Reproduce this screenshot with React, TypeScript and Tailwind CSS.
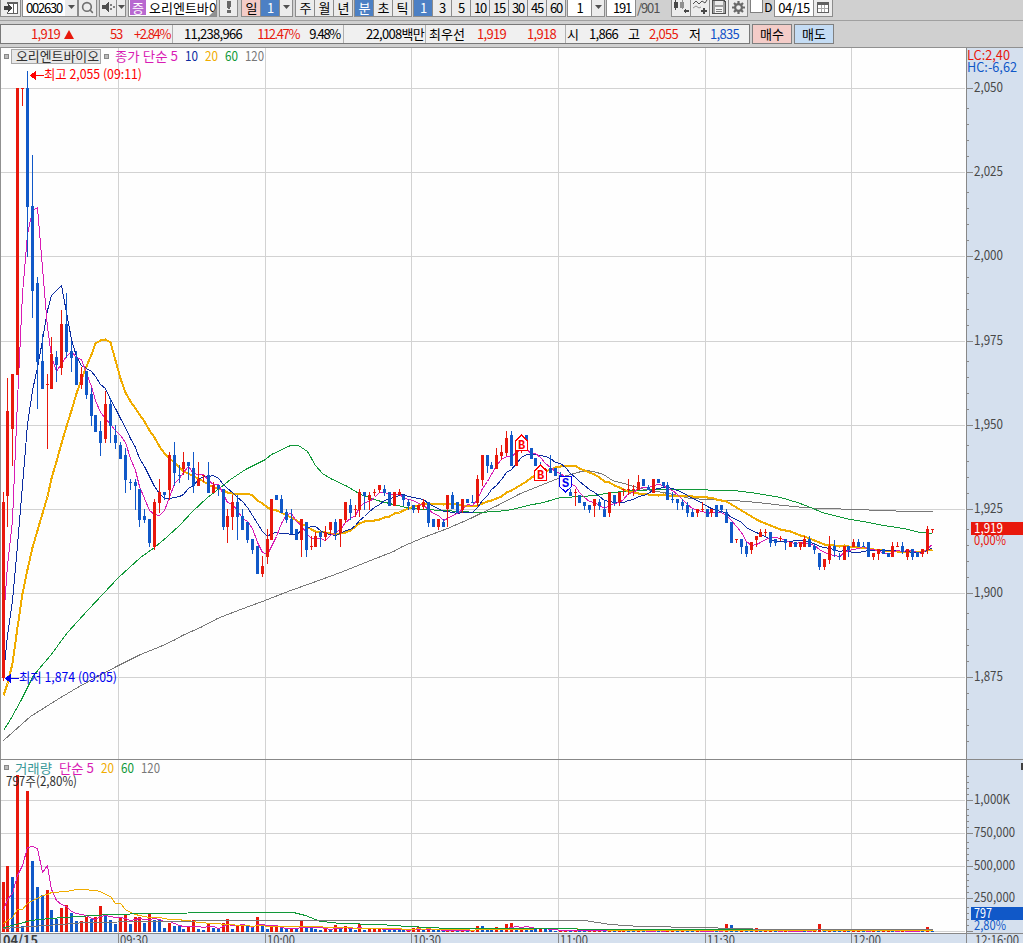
import type { ReactNode } from 'react';
import { Search } from 'lucide-react';

const RED = '#e8180c';
const BLUE = '#1058c8';
const MAGENTA = '#d81cb4';
const NAVY = '#0c2ca0';
const AMBER = '#f0ac00';
const GREEN = '#109838';
const GRAY = '#787878';

type Candle = [dir: 'u' | 'd', high: number, top: number, bottom: number, low: number];

// one-minute candles, y positions on the price pane
const candles: Candle[] = [
  ['u', 492, 502, 678, 681], ['u', 378, 411, 496, 527], ['u', 374, 374, 429, 466], ['u', 88, 88, 375, 375],
  ['u', 88, 88, 89, 106], ['d', 71, 88, 207, 257], ['d', 155, 206, 291, 318], ['d', 277, 283, 362, 409],
  ['d', 334, 361, 389, 389], ['u', 374, 384, 385, 449], ['u', 337, 354, 389, 389], ['d', 351, 357, 365, 382],
  ['u', 310, 324, 368, 375], ['d', 293, 324, 352, 358], ['d', 341, 351, 358, 372], ['d', 351, 357, 385, 385],
  ['u', 367, 374, 385, 389], ['d', 371, 371, 395, 399], ['d', 388, 394, 416, 426], ['d', 415, 415, 432, 432],
  ['d', 421, 431, 443, 456], ['u', 391, 404, 439, 443], ['d', 398, 404, 426, 443], ['d', 425, 435, 443, 449],
  ['d', 442, 445, 459, 459], ['d', 448, 455, 480, 493], ['d', 479, 482, 483, 490], ['d', 479, 482, 486, 510],
  ['d', 489, 489, 520, 527], ['d', 509, 516, 520, 523], ['d', 519, 519, 543, 547], ['u', 499, 502, 547, 550],
  ['u', 479, 492, 503, 513], ['d', 492, 492, 495, 500], ['u', 452, 455, 490, 500], ['d', 442, 455, 473, 486],
  ['d', 465, 475, 476, 483], ['u', 452, 462, 469, 475], ['d', 462, 462, 466, 480], ['d', 452, 468, 486, 493],
  ['u', 462, 479, 486, 486], ['u', 475, 475, 476, 482], ['d', 462, 475, 493, 493], ['u', 482, 485, 493, 493],
  ['d', 485, 485, 489, 496], ['d', 489, 489, 527, 530], ['u', 509, 516, 527, 543], ['u', 495, 502, 517, 530],
  ['d', 495, 502, 517, 540], ['d', 509, 516, 530, 530], ['d', 522, 522, 540, 543], ['d', 539, 539, 550, 554],
  ['d', 546, 546, 574, 574], ['u', 556, 566, 574, 577], ['u', 529, 539, 557, 564], ['u', 499, 499, 540, 540],
  ['d', 495, 495, 500, 500], ['d', 495, 499, 513, 513], ['d', 509, 512, 520, 523], ['d', 509, 519, 534, 534],
  ['d', 529, 529, 540, 540], ['u', 519, 519, 540, 557], ['d', 522, 522, 550, 557], ['u', 536, 546, 547, 550],
  ['u', 532, 536, 547, 547], ['d', 532, 532, 537, 547], ['u', 526, 532, 537, 541], ['u', 522, 522, 530, 534],
  ['d', 519, 522, 533, 540], ['u', 519, 519, 533, 547], ['u', 502, 502, 520, 523], ['d', 499, 505, 513, 520],
  ['u', 505, 509, 510, 517], ['u', 489, 492, 510, 517], ['d', 492, 492, 496, 510], ['u', 492, 495, 500, 510],
  ['u', 489, 492, 493, 496], ['u', 485, 485, 490, 493], ['d', 485, 489, 493, 496], ['d', 492, 492, 506, 506],
  ['u', 492, 492, 506, 506], ['u', 489, 492, 495, 495], ['d', 495, 495, 500, 506], ['d', 499, 502, 506, 510],
  ['d', 505, 505, 510, 513], ['u', 505, 505, 510, 513], ['u', 499, 502, 507, 510], ['d', 502, 502, 523, 527],
  ['d', 519, 519, 527, 527], ['u', 519, 519, 527, 530], ['d', 519, 522, 527, 527], ['u', 495, 495, 509, 527],
  ['d', 492, 495, 509, 509], ['d', 502, 502, 513, 513], ['u', 499, 499, 510, 513], ['d', 499, 499, 503, 503],
  ['d', 495, 502, 503, 503], ['u', 475, 479, 503, 506], ['u', 455, 455, 480, 486], ['d', 455, 455, 466, 473],
  ['d', 462, 465, 469, 469], ['u', 448, 455, 469, 469], ['u', 445, 452, 456, 460], ['u', 431, 438, 453, 456],
  ['d', 431, 435, 466, 466], ['u', 449, 449, 466, 466], ['u', 440, 440, 451, 453], ['d', 435, 435, 450, 450],
  ['d', 448, 448, 459, 459], ['d', 458, 458, 466, 466], ['d', 462, 465, 470, 470], ['u', 468, 469, 470, 472],
  ['d', 455, 468, 473, 473], ['d', 468, 468, 476, 476], ['d', 472, 475, 479, 479], ['d', 478, 478, 489, 489],
  ['d', 489, 492, 496, 496], ['u', 489, 492, 493, 506], ['d', 495, 495, 503, 503], ['d', 502, 502, 506, 510],
  ['d', 505, 505, 510, 513], ['u', 499, 499, 506, 517], ['d', 499, 502, 506, 510], ['d', 500, 509, 517, 517],
  ['u', 492, 492, 513, 517], ['d', 495, 495, 503, 506], ['u', 492, 492, 502, 506], ['u', 489, 489, 490, 496],
  ['u', 479, 489, 490, 495], ['u', 485, 489, 490, 496], ['u', 475, 482, 490, 490], ['d', 479, 479, 486, 486],
  ['d', 485, 487, 490, 490], ['u', 479, 479, 493, 493], ['d', 479, 479, 483, 483], ['d', 482, 482, 486, 487],
  ['d', 482, 485, 500, 500], ['d', 492, 499, 500, 503], ['d', 499, 499, 503, 510], ['d', 499, 502, 506, 510],
  ['d', 502, 505, 513, 517], ['d', 509, 512, 517, 517], ['u', 509, 509, 513, 517], ['u', 502, 509, 510, 512],
  ['d', 509, 509, 517, 517], ['u', 509, 509, 513, 517], ['d', 505, 505, 517, 517], ['d', 505, 505, 510, 513],
  ['d', 509, 512, 523, 523], ['d', 522, 522, 543, 543], ['u', 539, 539, 540, 543], ['d', 539, 539, 547, 554],
  ['d', 542, 546, 554, 557], ['u', 542, 542, 550, 554], ['u', 536, 536, 540, 547], ['u', 529, 532, 537, 537],
  ['u', 529, 532, 533, 536], ['d', 532, 532, 543, 547], ['d', 539, 539, 543, 546], ['u', 536, 538, 539, 541],
  ['d', 539, 539, 543, 550], ['u', 542, 542, 547, 547], ['d', 542, 542, 547, 547], ['u', 542, 542, 547, 550],
  ['u', 536, 539, 547, 547], ['d', 536, 539, 547, 547], ['d', 543, 546, 550, 554], ['d', 553, 553, 567, 570],
  ['u', 559, 559, 567, 570], ['u', 536, 546, 560, 564], ['d', 540, 546, 551, 557], ['d', 553, 556, 557, 560],
  ['u', 546, 546, 560, 560], ['d', 546, 546, 550, 557], ['u', 539, 542, 547, 547], ['d', 539, 542, 547, 547],
  ['d', 542, 546, 547, 547], ['d', 542, 542, 557, 557], ['u', 553, 553, 557, 560], ['u', 549, 549, 554, 560],
  ['d', 549, 549, 554, 554], ['d', 553, 553, 557, 557], ['u', 542, 546, 557, 557], ['u', 542, 546, 547, 547],
  ['d', 542, 546, 552, 554], ['u', 549, 549, 557, 560], ['d', 549, 549, 557, 560], ['d', 552, 552, 557, 557],
  ['u', 549, 549, 554, 557], ['u', 526, 529, 550, 554], ['u', 529, 529, 530, 533],
];

// bar heights on the volume pane, the remaining minutes are all close to zero
const volumeHead = [
  50, 66, 55, 157, 6, 141, 71, 45, 37, 42, 22, 13, 24, 27, 19, 10.9, 11, 15, 13, 15, 26, 16, 12, 8, 15, 18, 8, 14.9,
  15, 9, 18, 12, 11.9, 4, 9, 6, 5.9, 3, 5, 12, 3, 2, 9, 4, 3.9, 9, 13, 3, 6, 7, 6, 5, 15, 6, 3, 5, 6, 4, 3, 3.1, 3,
  11, 5, 4, 3, 2, 4, 2, 7, 4, 6, 3, 2, 8, 2, 2.9, 3, 3.1, 3, 2.9, 2.8, 2.7, 2, 2.1, 4, 5, 2, 3, 2.5, 2.4, 1, 1.1,
  2, 1.8, 2, 1.8, 2, 6, 5.9, 2, 1.9, 5, 2, 8, 9, 4, 4.1, 4, 3.9, 3.8, 3.9, 3,
];
const volumePeaks: Record<number, number> = {
  117: 2, 122: 3, 127: 3, 137: 3, 148: 8, 149: 7, 154: 4, 166: 3, 167: 8, 172: 3, 178: 3, 189: 5, 190: 1,
};
const volumes = candles.map((_, i) => volumeHead[i] ?? volumePeaks[i] ?? (i % 3 === 1 ? 1.6 : 1.5 - (i % 2) * 0.1));

const barX = (i: number) => Math.floor(3.02 + 4.8895 * i);

const movingAverage = (values: number[], span: number, head: number[]) =>
  values
    .map((_, i) => {
      if (i < span - 1) return head[i] === undefined ? '' : `${barX(i)},${head[i]}`;
      const slice = values.slice(i - span + 1, i + 1);
      const mean = slice.reduce((a, b) => a + b, 0) / span;
      return `${barX(i)},${Math.round(mean)}`;
    })
    .join(' ');

const closes = candles.map(([dir, , top, bottom]) => (dir === 'u' ? top : bottom));
const volumeY = volumes.map((v) => 932 - v);

const ma5 = movingAverage(closes, 5, [620, 565, 520, 400]);
const ma10 = movingAverage(closes, 10, [675, 635, 600, 545, 485, 424, 390, 367, 340]);
const ma20 = movingAverage(
  closes,
  20,
  [695, 683, 663, 627, 593, 569, 547, 530, 513, 496, 478, 461, 443, 426, 410, 393, 379, 366, 354]
);
const ma60 =
  '3,730 10,719 21,699 33,675 50,655 67,632 87,610 103,593 118,577 140,557 154,547 167,536 180,524 192,511 207,497 220,487 230,479 245,469 265,459 271,454 290,445 298,445 307,451 315,465 322,473 330,478 347,486 360,494 377,500 393,504 410,508 423,509 443,510 460,511 477,512 497,511 512,509 527,505 543,502 560,497 583,496 593,495 613,492 633,490 660,489 700,489 715,490 733,490 750,492 763,494 780,497 797,502 810,507 822,512 837,516 850,519 863,521 883,525 903,528 920,532 932,533';
const ma120 =
  '3,740 30,716 57,699 77,687 97,676 118,665 140,654 160,646 175,639 182,635 200,627 217,618 240,609 262,601 290,590 310,583 340,572 370,560 393,551 402,546 423,537 447,528 470,518 480,513 497,505 520,493 540,485 560,477 577,472 585,470 593,471 603,474 612,480 627,484 640,488 657,491 673,494 690,498 707,499 733,500 757,502 783,505 803,507 820,508 860,509 877,510 913,511 932,511';

const vol5 = movingAverage(volumeY, 5, [910, 899, 893, 875]);
const vol20 = movingAverage(
  volumeY,
  20,
  [923, 920, 917, 909, 909, 903, 900, 898, 895, 894, 892, 892, 891, 891, 890, 889, 889, 889, 890]
);
const vol60 =
  '3,927 20,923 30,920 50,918 78,916 110,914 150,913 225,912 275,912 293,912 305,915 320,921 333,922 338,923 380,924 407,926 430,927 447,928 560,928 593,929 600,929 932,929';
const vol120 = '3,928 30,926 60,924 85,922 150,921 240,920 585,920 590,921 610,924 640,926 700,927 770,929 932,929';

const gridX = [118, 265, 411, 558, 705, 851];
const priceTicks: [number, string][] = [
  [88, '2,050'], [172, '2,025'], [256, '2,000'], [341, '1,975'], [425, '1,950'], [509, '1,925'], [593, '1,900'],
  [677, '1,875'],
];
const volumeTicks: [number, string][] = [[800, '1,000K'], [833, '750,000'], [866, '500,000'], [898, '250,000']];
const hours: [number, string][] = [
  [118, '09:30'], [265, '10:00'], [411, '10:30'], [558, '11:00'], [705, '11:30'], [851, '12:00'],
];

function Line({ points, color, width = 1 }: { points: string; color: string; width?: number }) {
  return (
    <polyline points={points} fill="none" stroke={color} strokeWidth={width} transform="translate(0.5 0.5)" />
  );
}

function Label({ x, y, w, fill, children }: { x: number; y: number; w: number; fill: string; children: string }) {
  return (
    <text x={x} y={y} fill={fill} textLength={w} lengthAdjust="spacingAndGlyphs" stroke="none">
      {children}
    </text>
  );
}

function Marker({ x, y, kind }: { x: number; y: number; kind: 'B' | 'S' }) {
  const color = kind === 'B' ? '#ff0000' : '#0000f0';
  const d = kind === 'B' ? 'M-6 6 L0 0 L6 6 V15.5 H-6 Z' : 'M-6 0 H6 V10 L0 15.5 L-6 10 Z';
  return (
    <g transform={`translate(${x} ${y})`}>
      <path d={d} fill="#fff" stroke={color} />
      <text
        x="0"
        y={kind === 'B' ? 14 : 10}
        fill={color}
        textAnchor="middle"
        className="font-['Liberation_Mono',monospace] text-[12px] font-bold"
      >
        {kind}
      </text>
    </g>
  );
}

function Chart() {
  return (
    <svg width="966" height="886" viewBox="0 48 966 886" className="block bg-[#fefefe]" shapeRendering="crispEdges">
      <g fill="#d2d2d2">
        {gridX.map((x) => (
          <rect key={x} x={x} y="48" width="1" height="886" />
        ))}
        {[...priceTicks, ...volumeTicks].map(([y]) => (
          <rect key={y} x="0" y={y} width="965" height="1" />
        ))}
        <rect x="0" y="931" width="965" height="1" />
      </g>
      <rect x="0" y="48" width="1" height="886" fill="#909090" />
      <rect x="0" y="759" width="966" height="1" fill="#888" />

      {/* volume */}
      {volumes.map((v, i) => {
        const h = Math.max(1, Math.round(v));
        return (
          <rect
            key={i}
            x={barX(i) - 1}
            y={932 - h}
            width="3"
            height={h}
            fill={i === 0 || v > volumes[i - 1] ? RED : BLUE}
          />
        );
      })}
      <Line points={vol5} color={MAGENTA} />
      <Line points={vol20} color={AMBER} />
      <Line points={vol60} color={GREEN} />
      <Line points={vol120} color={GRAY} />
      <Label x={6} y={786} w={71} fill="#303030">797주(2,80%)</Label>

      {/* price */}
      <Line points={ma120} color={GRAY} />
      <Line points={ma60} color={GREEN} />
      <Line points={ma20} color={AMBER} width={2} />
      <Line points={ma10} color={NAVY} />
      <Line points={ma5} color={MAGENTA} />
      {candles.map(([dir, high, top, bottom, low], i) => (
        <g key={i} fill={dir === 'u' ? RED : BLUE}>
          <rect x={barX(i)} y={high} width="1" height={Math.max(1, low - high)} />
          <rect x={barX(i) - 1} y={top} width="3" height={bottom - top} />
        </g>
      ))}
      <Marker x={521.5} y={435} kind="B" />
      <Marker x={540.5} y={465} kind="B" />
      <Marker x={565.5} y={476.5} kind="S" />

      <path d="M30 75.5 L36 70.5 V80.5 Z" fill="#ff0000" />
      <rect x="36" y="75" width="8" height="1" fill="#ff0000" />
      <Label x={44} y={79} w={98} fill="#ff0000">최고 2,055 (09:11)</Label>
      <path d="M5 678.5 L11 673.5 V683.5 Z" fill="#0000f0" />
      <rect x="11" y="678" width="8" height="1" fill="#0000f0" />
      <Label x={19} y={682} w={98} fill="#0000f0">최저 1,874 (09:05)</Label>

      {/* legends */}
      <rect x="4.5" y="54.5" width="4" height="4" fill="#bbb" stroke="#888" />
      <rect x="11.5" y="49.5" width="89" height="14" fill="#e8e8e8" stroke="#a8a8a8" />
      <Label x={16} y={61} w={83} fill="#303030">오리엔트바이오</Label>
      <rect x="104.5" y="54.5" width="4" height="4" fill="#bbb" stroke="#888" />
      <Label x={115} y={61} w={63} fill={MAGENTA}>종가 단순 5</Label>
      <Label x={185} y={61} w={13} fill={NAVY}>10</Label>
      <Label x={205} y={61} w={13} fill={AMBER}>20</Label>
      <Label x={225} y={61} w={13} fill={GREEN}>60</Label>
      <Label x={245} y={61} w={19} fill={GRAY}>120</Label>
      <rect x="4.5" y="765.5" width="4" height="4" fill="#bbb" stroke="#888" />
      <Label x={15} y={773} w={37} fill="#389898">거래량</Label>
      <Label x={59} y={773} w={35} fill={MAGENTA}>단순 5</Label>
      <Label x={101} y={773} w={13} fill={AMBER}>20</Label>
      <Label x={121} y={773} w={13} fill={GREEN}>60</Label>
      <Label x={141} y={773} w={19} fill={GRAY}>120</Label>
    </svg>
  );
}

function ValueAxis() {
  return (
    <svg width="57" height="886" viewBox="966 48 57 886" className="block bg-[#d5e0ee]" shapeRendering="crispEdges">
      <rect x="966" y="48" width="1" height="886" fill="#888" />
      <rect x="966" y="759" width="57" height="1" fill="#888" />
      <g fill="#888">
        {priceTicks.map(([y]) => (
          <g key={y}>
            <rect x="967" y={y} width="6" height="1" />
            {[16, 32, 48, 64].map((d) => y - d > 72 && <rect key={d} x="967" y={y - d} width="2" height="1" />)}
          </g>
        ))}
        {[693, 709, 725, 741].map((y) => (
          <rect key={y} x="967" y={y} width="2" height="1" />
        ))}
        {[...volumeTicks.map(([y]) => y), 931].map((y) => (
          <g key={y}>
            <rect x="967" y={y} width="6" height="1" />
            {[6, 12, 18, 24].map((d) => (
              <rect key={d} x="967" y={y - d} width="2" height="1" />
            ))}
          </g>
        ))}
      </g>
      <Label x={967} y={60} w={43} fill={RED}>LC:2,40</Label>
      <Label x={967} y={72} w={50} fill={BLUE}>HC:-6,62</Label>
      {priceTicks.map(([y, text]) => (
        <Label key={y} x={974} y={y + 4} w={29} fill="#484848">{text}</Label>
      ))}
      {volumeTicks.map(([y, text]) => (
        <Label key={y} x={974} y={y + 4} w={text.length === 6 ? 36 : 41} fill="#484848">{text}</Label>
      ))}
      <rect x="971" y="522" width="52" height="13" fill={RED} />
      <Label x={974} y={533} w={29} fill="#fff">1,919</Label>
      <Label x={974} y={545} w={32} fill={RED}>0,00%</Label>
      <rect x="971" y="907" width="52" height="13" fill={BLUE} />
      <Label x={974} y={918} w={18} fill="#fff">797</Label>
      <Label x={974} y={930} w={32} fill={BLUE}>2,80%</Label>
      <rect x="1021" y="763" width="2" height="7" fill="#404040" />
    </svg>
  );
}

function TimeAxis() {
  return (
    <svg width="1023" height="10" viewBox="0 933 1023 10" className="block bg-[#d5e0ee]" shapeRendering="crispEdges">
      <rect x="0" y="933" width="1023" height="1" fill="#888" />
      <rect x="0" y="933" width="1" height="10" fill="#888" />
      <rect x="966" y="933" width="1" height="10" fill="#888" />
      <g className="font-bold">
        <Label x={3} y={945} w={35} fill="#404040">04/15</Label>
      </g>
      {hours.map(([x, text]) => (
        <g key={x}>
          <rect x={x} y="933" width="1" height="10" fill="#888" />
          <Label x={x + 2} y={945} w={28} fill="#484848">{text}</Label>
        </g>
      ))}
      <Label x={975} y={945} w={44} fill="#484848">12:16:00</Label>
    </svg>
  );
}

function Seg({ children, className = 'w-[19px] bg-[#ececec]' }: { children?: ReactNode; className?: string }) {
  return (
    <div
      className={`flex h-full shrink-0 items-center justify-center border-r border-[#8c8c8c] pb-[2px] tracking-[-1.2px] ${className}`}
    >
      {children}
    </div>
  );
}

function Group({ children, className = '' }: { children: ReactNode; className?: string }) {
  return (
    <div className={`flex h-[17px] shrink-0 border-b border-l border-[#8c8c8c] ${className}`}>{children}</div>
  );
}

function Caret() {
  return (
    <svg width="7" height="4" viewBox="0 0 7 4">
      <path d="M0 0 H7 L3.5 4 Z" fill="#505050" />
    </svg>
  );
}

function Toolbar() {
  return (
    <div className="flex h-5 shrink-0 items-start bg-[#d0d0d0]">
      <Group>
        <Seg className="w-[20px] bg-[#ececec]">
          <svg width="14" height="13" viewBox="0 0 14 13" shapeRendering="crispEdges">
            <path d="M3.5 3 V1.5 H13.5 V12.5 H3.5 V11" fill="#fff" stroke="#606060" />
            <rect x="3" y="1" width="11" height="2" fill="#606060" />
            <rect x="9" y="3" width="1" height="9" fill="#606060" />
            <path d="M0 5 H4 V3 L8 7 L4 11 V9 H0 Z" fill="#404040" />
          </svg>
        </Seg>
      </Group>
      <Group className="ml-[1px]">
        <Seg className="w-[42px] border-r-0 bg-white">002630</Seg>
        <Seg className="w-[13px] bg-[#ececec]"><Caret /></Seg>
      </Group>
      <Group>
        <Seg className="w-[18px] bg-[#ececec]"><Search size={13} strokeWidth={3} color="#707070" className="shrink-0" /></Seg>
      </Group>
      <Group className="ml-[2px]">
        <Seg className="w-[17px] bg-[#ececec]">
          <svg width="13" height="12" viewBox="0 0 13 12" shapeRendering="crispEdges">
            <path d="M0 4 H3 L7 0 V12 L3 8 H0 Z" fill="#505050" />
            <path d="M8 3 h2 v2 h-2 z M8 7 h2 v2 h-2 z M11 5 h2 v2 h-2 z" fill="#808080" />
          </svg>
        </Seg>
        <Seg className="w-[9px] bg-[#ececec]"><Caret /></Seg>
      </Group>
      <Group className="ml-[2px]">
        <Seg className="relative w-[88px] justify-start! overflow-hidden whitespace-nowrap bg-white tracking-normal!">
          <span className="mx-px flex h-[15px] w-4 shrink-0 items-center justify-center bg-[#b868d0] text-white">증</span>
          <span className="ml-[2px] w-[67px] shrink-0 overflow-hidden leading-[15px]">오리엔트바이오</span>
          <svg width="7" height="7" className="absolute right-0 bottom-0">
            <path d="M7 0 V7 H0 Z" fill="#909090" />
          </svg>
        </Seg>
      </Group>
      <Group className="ml-[2px]">
        <Seg className="w-[18px] bg-[#ececec]">
          <svg width="4" height="12" viewBox="0 0 4 12" shapeRendering="crispEdges">
            <path d="M0 0 H4 V5 L3 8 H1 L0 5 Z M0 9 H4 V12 H0 Z" fill="#686868" />
          </svg>
        </Seg>
      </Group>
      <Group className="ml-[3px]">
        <Seg className="w-[19px] bg-[#f4ccc8]">일</Seg>
        <Seg className="w-[19px] bg-[#4c80c4] text-white">1</Seg>
        <Seg className="w-[13px] bg-[#ececec]"><Caret /></Seg>
      </Group>
      <Group className="ml-[2px]">
        <Seg>주</Seg>
        <Seg>월</Seg>
        <Seg>년</Seg>
      </Group>
      <Group className="ml-px">
        <Seg className="w-[19px] bg-[#4c80c4] text-white">분</Seg>
        <Seg>초</Seg>
        <Seg>틱</Seg>
      </Group>
      <Group className="ml-px">
        <Seg className="w-[19px] bg-[#4c80c4] text-white">1</Seg>
        {['3', '5', '10', '15', '30', '45', '60'].map((n) => (
          <Seg key={n}>{n}</Seg>
        ))}
      </Group>
      <Group className="ml-px">
        <Seg className="w-[24px] bg-white">1</Seg>
        <Seg className="w-[13px] bg-[#ececec]"><Caret /></Seg>
      </Group>
      <Group className="ml-px">
        <Seg className="w-[29px] justify-end! bg-white pr-[4px]">191</Seg>
      </Group>
      <span className="flex h-[17px] w-[35px] items-center pb-[3px] pl-px tracking-[-1.1px] text-[#505050]">/901</span>
      <Group>
        <Seg>
          <svg width="15" height="14" viewBox="0 0 15 14" shapeRendering="crispEdges">
            <path d="M0 2 h4 v6 h-4 z M1 0 h1 v10 h-1 z" fill="#484848" />
            <path d="M6 2 h4 v6 h-4 z M8 0 h1 v9 h-1 z" fill="#909090" />
            <path d="M9 11 l3 -3 v2 h3 v2 h-3 v2 z" fill="#484848" />
          </svg>
        </Seg>
        <Seg>
          <svg width="15" height="14" viewBox="0 0 15 14">
            <path d="M0 4 L3 1 L6 4 L9 1 L12 3 L14 0" fill="none" stroke="#505050" />
            <path d="M0 8 L3 6 L6 8 L8 7" fill="none" stroke="#909090" />
            <path d="M8 11 h6 M11 8 v6" stroke="#484848" strokeWidth="2" />
          </svg>
        </Seg>
        <Seg>
          <svg width="14" height="14" viewBox="0 0 14 14" shapeRendering="crispEdges">
            <path d="M0.5 0.5 H12 L13.5 2 V13.5 H0.5 Z" fill="#a0a0a0" stroke="#505050" />
            <rect x="3" y="1" width="8" height="4" fill="#ececec" />
            <rect x="3" y="7" width="8" height="6" fill="#f4f4f4" />
            <path d="M4 9.5 h6 M4 11.5 h6" stroke="#808080" />
          </svg>
        </Seg>
        <Seg>
          <svg width="13" height="13" viewBox="0 0 13 13">
            <path
              d="M6.5 0 V13 M0 6.5 H13 M2 2 L11 11 M11 2 L2 11"
              stroke="#686868"
              strokeWidth="2.2"
            />
            <circle cx="6.5" cy="6.5" r="3.4" fill="#ececec" stroke="#686868" strokeWidth="2.2" />
          </svg>
        </Seg>
      </Group>
      <div className="ml-[2px] h-[13px] w-[13px] border border-t-0 border-[#808080] bg-white" />
      <span className="flex h-[14px] w-[11px] items-center justify-center pb-px text-[12px]">D</span>
      <Group>
        <Seg className="w-[38px] border-r-0 bg-white tracking-[-0.5px]!">04/15</Seg>
        <Seg className="w-[20px] border-l bg-[#ececec]">
          <svg width="12" height="11" viewBox="0 0 12 11" shapeRendering="crispEdges">
            <rect width="12" height="11" fill="#606060" />
            <path d="M1 3 h10 v7 h-10 z" fill="#fff" />
            <path d="M4.5 3 v7 M7.5 3 v7 M1 6.5 h10" stroke="#a8a8a8" />
          </svg>
        </Seg>
      </Group>
    </div>
  );
}

function QuoteBar() {
  return (
    <div className="flex h-[28px] shrink-0 items-start border-t border-b border-[#909090] border-t-[#a0a0a0] bg-[#d0d0d0] pt-[3px]">
      <div className="flex h-[20px] w-[750px] shrink-0 items-stretch border border-[#787878] bg-[#f0f0f0] tracking-[-0.7px] whitespace-nowrap *:flex *:shrink-0 *:items-center *:border-[#b0b0b0] *:pb-[2px]">
        <div className="w-[172px] border-r text-right text-[#e8180c]">
          <span className="w-[59px] shrink-0">1,919</span>
          <svg width="10" height="9" viewBox="0 0 10 9" className="mt-[2px] ml-[4px] shrink-0">
            <path d="M5 0 L10 9 H0 Z" fill={RED} />
          </svg>
          <span className="w-[48px] shrink-0 tracking-[-1.2px]">53</span>
          <span className="w-[48px] shrink-0 tracking-[-1.4px]">+2.84%</span>
        </div>
        <div className="w-[171px] border-r text-right">
          <span className="w-[69px] shrink-0">11,238,966</span>
          <span className="w-[57px] shrink-0 tracking-[-1.4px] text-[#e8180c]">112.47%</span>
          <span className="w-[41px] shrink-0 tracking-[-1.3px]">9.48%</span>
        </div>
        <div className="w-[82px] justify-end border-r pr-px tracking-[-0.7px]">22,008백만</div>
        <div className="w-[140px] border-r pl-[3px]">
          <span className="w-[48px] shrink-0 tracking-normal">최우선</span>
          <span className="w-[50px] shrink-0 text-[#e8180c]">1,919</span>
          <span className="text-[#e8180c]">1,918</span>
        </div>
        <div className="pl-px">
          <span className="w-[22px] shrink-0">시</span>
          <span className="w-[39px] shrink-0">1,866</span>
          <span className="w-[21px] shrink-0">고</span>
          <span className="w-[40px] shrink-0 text-[#e8180c]">2,055</span>
          <span className="w-[21px] shrink-0">저</span>
          <span className="text-[#1050c8]">1,835</span>
        </div>
      </div>
      <button className="ml-[2px] h-[20px] w-[40px] shrink-0 border border-[#808080] bg-[#f4ccc8] pb-[2px]">매수</button>
      <button className="ml-[2px] h-[20px] w-[40px] shrink-0 border border-[#808080] bg-[#c4dcf4] pb-[2px]">매도</button>
    </div>
  );
}

export default function App() {
  return (
    <div className="flex h-[943px] w-[1023px] flex-col overflow-hidden bg-[#d0d0d0] font-['Noto_Sans_CJK_KR',sans-serif] text-[13px] leading-none text-black">
      <Toolbar />
      <QuoteBar />
      <div className="flex h-[885px] shrink-0 overflow-hidden">
        <Chart />
        <ValueAxis />
      </div>
      <TimeAxis />
    </div>
  );
}
